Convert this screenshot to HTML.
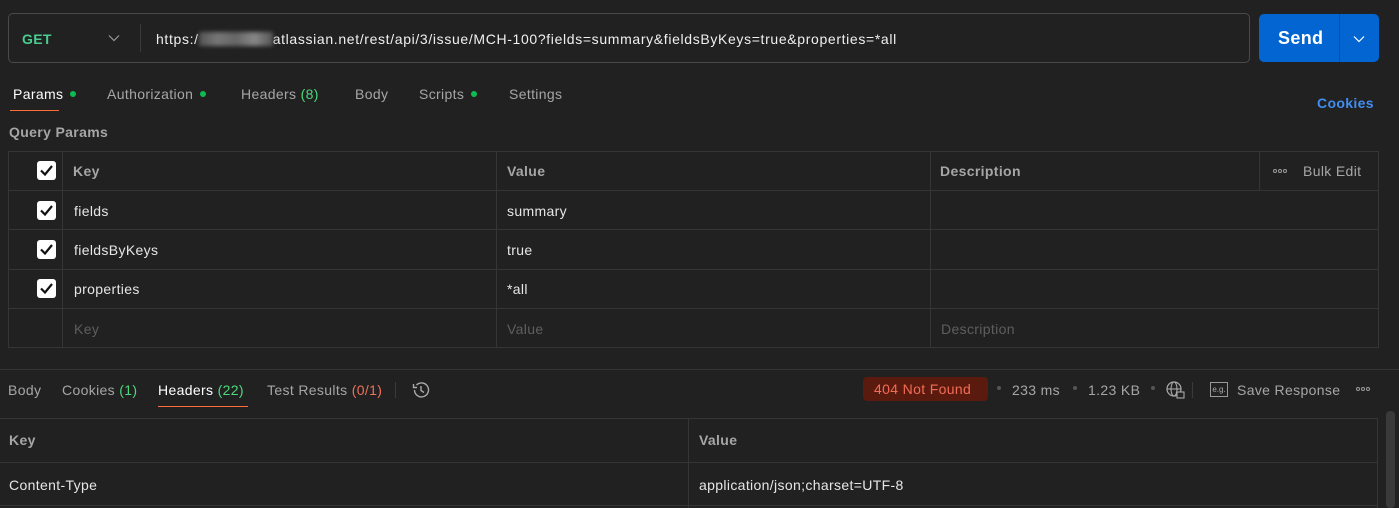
<!DOCTYPE html>
<html><head><meta charset="utf-8"><style>
*{margin:0;padding:0;box-sizing:border-box}
body{width:1399px;height:508px;background:#212121;font-family:"Liberation Sans",sans-serif;font-size:14px;letter-spacing:0.35px;color:#e6e6e6;position:relative;overflow:hidden}
.a{position:absolute;white-space:nowrap}
.g{color:#a6a6a6}
.dot{display:inline-block;width:6px;height:6px;border-radius:50%;background:#0cbb52;margin-left:7px;vertical-align:2px}
.cb{position:absolute;width:19px;height:19px;background:#fff;border-radius:3px}
.cb svg{position:absolute;left:2px;top:3px}
.hl{position:absolute;height:1px;background:#353535}
.vl{position:absolute;width:1px;background:#353535}
.dots{position:absolute;display:flex;gap:1px}
.dots i{display:block;width:4px;height:4px;border:1px solid #999;border-radius:50%}
</style></head><body>
<div class="a" style="left:8px;top:13px;width:1242px;height:50px;border:1px solid #4a4a4a;border-radius:5px"></div>
<div class="a" style="left:22px;top:31px;color:#49cc90;font-weight:bold;font-size:14px">GET</div>
<svg class="a" style="left:108px;top:34px" width="12" height="8"><path d="M1 1.5L6 6.5L11 1.5" stroke="#999" fill="none" stroke-width="1.2"/></svg>
<div class="vl" style="left:140px;top:24px;height:28px;background:#3a3a3a"></div>
<div class="a" style="left:156px;top:31px;color:#f0f0f0;letter-spacing:0.65px">https:/<span style="display:inline-block;width:74px;height:14px;background:linear-gradient(90deg,#555,#777,#666,#888,#555);filter:blur(2px);vertical-align:-2px"></span>atlassian.net/rest/api/3/issue/MCH-100?fields=summary&amp;fieldsByKeys=true&amp;properties=*all</div>
<div class="a" style="left:1259px;top:14px;width:120px;height:48px;background:#0265d2;border-radius:5px"></div>
<div class="vl" style="left:1339px;top:14px;height:48px;background:#0a4f9e"></div>
<div class="a" style="left:1278px;top:28px;font-size:18px;font-weight:bold;color:#fff">Send</div>
<svg class="a" style="left:1353px;top:35px" width="12" height="8"><path d="M1 1.5L6 6.5L11 1.5" stroke="#fff" fill="none" stroke-width="1.2"/></svg>
<div class="a" style="left:13px;top:86px;color:#fff">Params<span class="dot"></span></div>
<div class="a" style="left:10px;top:110px;width:49px;height:1px;background:#ff6c37"></div>
<div class="a g" style="left:107px;top:86px">Authorization<span class="dot"></span></div>
<div class="a g" style="left:241px;top:86px">Headers <span style="color:#4cd97b">(8)</span></div>
<div class="a g" style="left:355px;top:86px">Body</div>
<div class="a g" style="left:419px;top:86px">Scripts<span class="dot"></span></div>
<div class="a g" style="left:509px;top:86px">Settings</div>
<div class="a" style="left:1317px;top:95px;color:#3f8ef0;font-weight:bold">Cookies</div>
<div class="a g" style="left:9px;top:124px;font-weight:bold;font-size:14px">Query Params</div>
<div class="a" style="left:8px;top:151px;width:1371px;height:197px;border:1px solid #353535"></div>
<div class="hl" style="left:8px;top:190px;width:1371px"></div>
<div class="hl" style="left:8px;top:229px;width:1371px"></div>
<div class="hl" style="left:8px;top:269px;width:1371px"></div>
<div class="hl" style="left:8px;top:308px;width:1371px"></div>
<div class="vl" style="left:62px;top:151px;height:197px"></div>
<div class="vl" style="left:496px;top:151px;height:197px"></div>
<div class="vl" style="left:930px;top:151px;height:197px"></div>
<div class="vl" style="left:1259px;top:151px;height:39px"></div>
<div class="cb" style="left:37px;top:161px"><svg width="15" height="13"><path d="M2 6.5L6 10.5L13 2" stroke="#111" fill="none" stroke-width="2.2"/></svg></div>
<div class="cb" style="left:37px;top:201px"><svg width="15" height="13"><path d="M2 6.5L6 10.5L13 2" stroke="#111" fill="none" stroke-width="2.2"/></svg></div>
<div class="cb" style="left:37px;top:240px"><svg width="15" height="13"><path d="M2 6.5L6 10.5L13 2" stroke="#111" fill="none" stroke-width="2.2"/></svg></div>
<div class="cb" style="left:37px;top:279px"><svg width="15" height="13"><path d="M2 6.5L6 10.5L13 2" stroke="#111" fill="none" stroke-width="2.2"/></svg></div>
<div class="a g" style="left:73px;top:163px;font-weight:bold">Key</div>
<div class="a g" style="left:507px;top:163px;font-weight:bold">Value</div>
<div class="a g" style="left:940px;top:163px;font-weight:bold">Description</div>
<div class="dots" style="left:1273px;top:169px"><i></i><i></i><i></i></div>
<div class="a g" style="left:1303px;top:163px">Bulk Edit</div>
<div class="a" style="left:74px;top:203px">fields</div><div class="a" style="left:507px;top:203px">summary</div>
<div class="a" style="left:74px;top:242px">fieldsByKeys</div><div class="a" style="left:507px;top:242px">true</div>
<div class="a" style="left:74px;top:281px">properties</div><div class="a" style="left:507px;top:281px">*all</div>
<div class="a" style="left:74px;top:321px;color:#5e5e5e">Key</div><div class="a" style="left:507px;top:321px;color:#5e5e5e">Value</div><div class="a" style="left:941px;top:321px;color:#5e5e5e">Description</div>
<div class="hl" style="left:0;top:369px;width:1399px"></div>
<div class="a g" style="left:8px;top:382px">Body</div>
<div class="a g" style="left:62px;top:382px">Cookies <span style="color:#4cd97b">(1)</span></div>
<div class="a" style="left:158px;top:382px;color:#fff">Headers <span style="color:#4cd97b">(22)</span></div>
<div class="a" style="left:158px;top:406px;width:90px;height:1px;background:#ff6c37"></div>
<div class="a g" style="left:267px;top:382px">Test Results <span style="color:#f0705a">(0/1)</span></div>
<div class="vl" style="left:395px;top:382px;height:16px;background:#3a3a3a"></div>
<svg class="a" style="left:411px;top:380px" width="20" height="20" viewBox="0 0 20 20"><path d="M3.5 10A7 7 0 1 0 5.5 5" stroke="#aaa" fill="none" stroke-width="1.4"/><path d="M2.5 4v3.5H6" stroke="#aaa" fill="none" stroke-width="1.4"/><path d="M10 6v4.5l3 2" stroke="#aaa" fill="none" stroke-width="1.4"/></svg>
<div class="a" style="left:863px;top:377px;width:125px;height:24px;background:#5a1a0e;border-radius:4px"></div>
<div class="a" style="left:874px;top:381px;color:#f26d57">404 Not Found</div>
<div class="a" style="left:997px;top:386px;width:4px;height:4px;border-radius:50%;background:#555"></div>
<div class="a g" style="left:1012px;top:382px">233 ms</div>
<div class="a" style="left:1073px;top:386px;width:4px;height:4px;border-radius:50%;background:#555"></div>
<div class="a g" style="left:1088px;top:382px">1.23 KB</div>
<div class="a" style="left:1151px;top:386px;width:4px;height:4px;border-radius:50%;background:#555"></div>
<svg class="a" style="left:1165px;top:380px" width="22" height="20" viewBox="0 0 22 20"><circle cx="9" cy="9" r="7" stroke="#aaa" fill="none" stroke-width="1.2"/><ellipse cx="9" cy="9" rx="3" ry="7" stroke="#aaa" fill="none" stroke-width="1.1"/><path d="M2 9h14" stroke="#aaa" stroke-width="1.1"/><rect x="12" y="12" width="7" height="6" fill="#212121" stroke="#aaa" stroke-width="1.1"/></svg>
<div class="vl" style="left:1192px;top:382px;height:16px;background:#3a3a3a"></div>
<div class="a" style="left:1210px;top:382px;width:18px;height:15px;border:1px solid #999;font-size:8px;letter-spacing:0;color:#aaa;text-align:center;line-height:13px">e.g.</div>
<div class="a g" style="left:1237px;top:382px">Save Response</div>
<div class="dots" style="left:1356px;top:387px"><i></i><i></i><i></i></div>
<div class="hl" style="left:0;top:418px;width:1378px"></div>
<div class="hl" style="left:0;top:462px;width:1378px"></div>
<div class="hl" style="left:0;top:505px;width:1378px"></div>
<div class="vl" style="left:688px;top:418px;height:90px"></div>
<div class="vl" style="left:1377px;top:418px;height:90px"></div>
<div class="a" style="left:1386px;top:411px;width:9px;height:97px;background:#3a3a3a;border-radius:4px"></div>
<div class="a g" style="left:9px;top:432px;font-weight:bold">Key</div>
<div class="a g" style="left:699px;top:432px;font-weight:bold">Value</div>
<div class="a" style="left:9px;top:477px">Content-Type</div>
<div class="a" style="left:699px;top:477px">application/json;charset=UTF-8</div>
</body></html>
